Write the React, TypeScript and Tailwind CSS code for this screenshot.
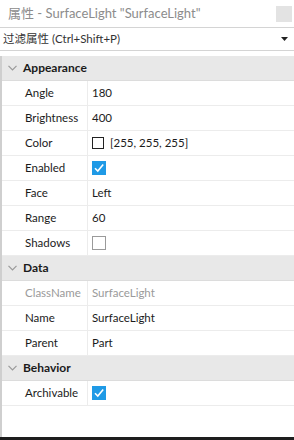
import React from 'react';

type Row = { label: string; value?: string; kind?: 'text' | 'check' | 'color'; checked?: boolean; muted?: boolean };
type Section = { title: string; rows: Row[] };

const sections: Section[] = [
  {
    title: 'Appearance',
    rows: [
      { label: 'Angle', value: '180' },
      { label: 'Brightness', value: '400' },
      { label: 'Color', value: '[255, 255, 255]', kind: 'color' },
      { label: 'Enabled', kind: 'check', checked: true },
      { label: 'Face', value: 'Left' },
      { label: 'Range', value: '60' },
      { label: 'Shadows', kind: 'check', checked: false },
    ],
  },
  {
    title: 'Data',
    rows: [
      { label: 'ClassName', value: 'SurfaceLight', muted: true },
      { label: 'Name', value: 'SurfaceLight' },
      { label: 'Parent', value: 'Part' },
    ],
  },
  {
    title: 'Behavior',
    rows: [{ label: 'Archivable', kind: 'check', checked: true }],
  },
];

const CheckBox: React.FC<{ checked?: boolean }> = ({ checked }) =>
  checked ? (
    <div className="w-[14px] h-[14px] bg-[#1f9ae6] flex items-center justify-center">
      <svg width="12" height="12" viewBox="0 0 12 12">
        <path d="M2 6.2 L4.8 9 L10.2 2.5" fill="none" stroke="white" strokeWidth="1.6" />
      </svg>
    </div>
  ) : (
    <div className="w-[14px] h-[14px] border border-[#9a9a9a] bg-white" />
  );

const PropRow: React.FC<{ row: Row }> = ({ row }) => (
  <div className="flex h-[25px] border-b border-[#ececec]">
    <div
      className={`w-[86px] shrink-0 pl-[23px] flex items-center border-r border-[#ececec] whitespace-nowrap overflow-hidden ${
        row.muted ? 'text-[#9a9a9a]' : 'text-[#1b1b1b]'
      }`}
    >
      {row.label}
    </div>
    <div className={`flex-1 pl-[4px] flex items-center ${row.muted ? 'text-[#9a9a9a]' : 'text-[#1b1b1b]'}`}>
      {row.kind === 'check' ? (
        <CheckBox checked={row.checked} />
      ) : row.kind === 'color' ? (
        <div className="flex items-center gap-[6px]">
          <div className="w-[12px] h-[12px] border border-[#222] bg-white" />
          <span>{row.value}</span>
        </div>
      ) : (
        row.value
      )}
    </div>
  </div>
);

export default function App() {
  return (
    <div
      className="w-[294px] h-[440px] bg-white flex flex-col text-[11.5px] overflow-hidden"
      style={{ fontFamily: 'Lato, "Noto Sans CJK SC", sans-serif' }}
    >
      <div className="h-[27px] shrink-0 flex items-center justify-between pl-[8px] pr-[2px]">
        <span className="text-[#8c8c8c] text-[13px]">属性 - SurfaceLight "SurfaceLight"</span>
        <div className="w-[16px] h-[16px] bg-[#e3e3e3]" />
      </div>
      <div className="h-[24px] shrink-0 flex items-center justify-between border-y border-[#d4d4d4] pl-[3px] pr-[6px]">
        <span className="text-[#333] text-[11.5px]">过滤属性 (Ctrl+Shift+P)</span>
        <svg width="7" height="4" viewBox="0 0 7 4">
          <path d="M0 0 H7 L3.5 4 Z" fill="#222" />
        </svg>
      </div>
      <div className="flex-1 mt-[5px] border-l-2 border-[#cfcfcf] flex flex-col">
        {sections.map((s) => (
          <div key={s.title}>
            <div className="h-[25px] bg-[#e8e8e8] flex items-center border-b border-[#dcdcdc]">
              <div className="w-[21px] flex justify-center">
                <svg width="9" height="6" viewBox="0 0 9 6">
                  <path d="M0.5 0.8 L4.5 4.8 L8.5 0.8" fill="none" stroke="#9a9a9a" strokeWidth="1.2" />
                </svg>
              </div>
              <span className="font-bold text-[#1b1b1b] text-[12px]">{s.title}</span>
            </div>
            {s.rows.map((r) => (
              <PropRow key={r.label} row={r} />
            ))}
          </div>
        ))}
      </div>
      <div className="h-[3px] shrink-0 bg-[#1e1e1e]" />
    </div>
  );
}
